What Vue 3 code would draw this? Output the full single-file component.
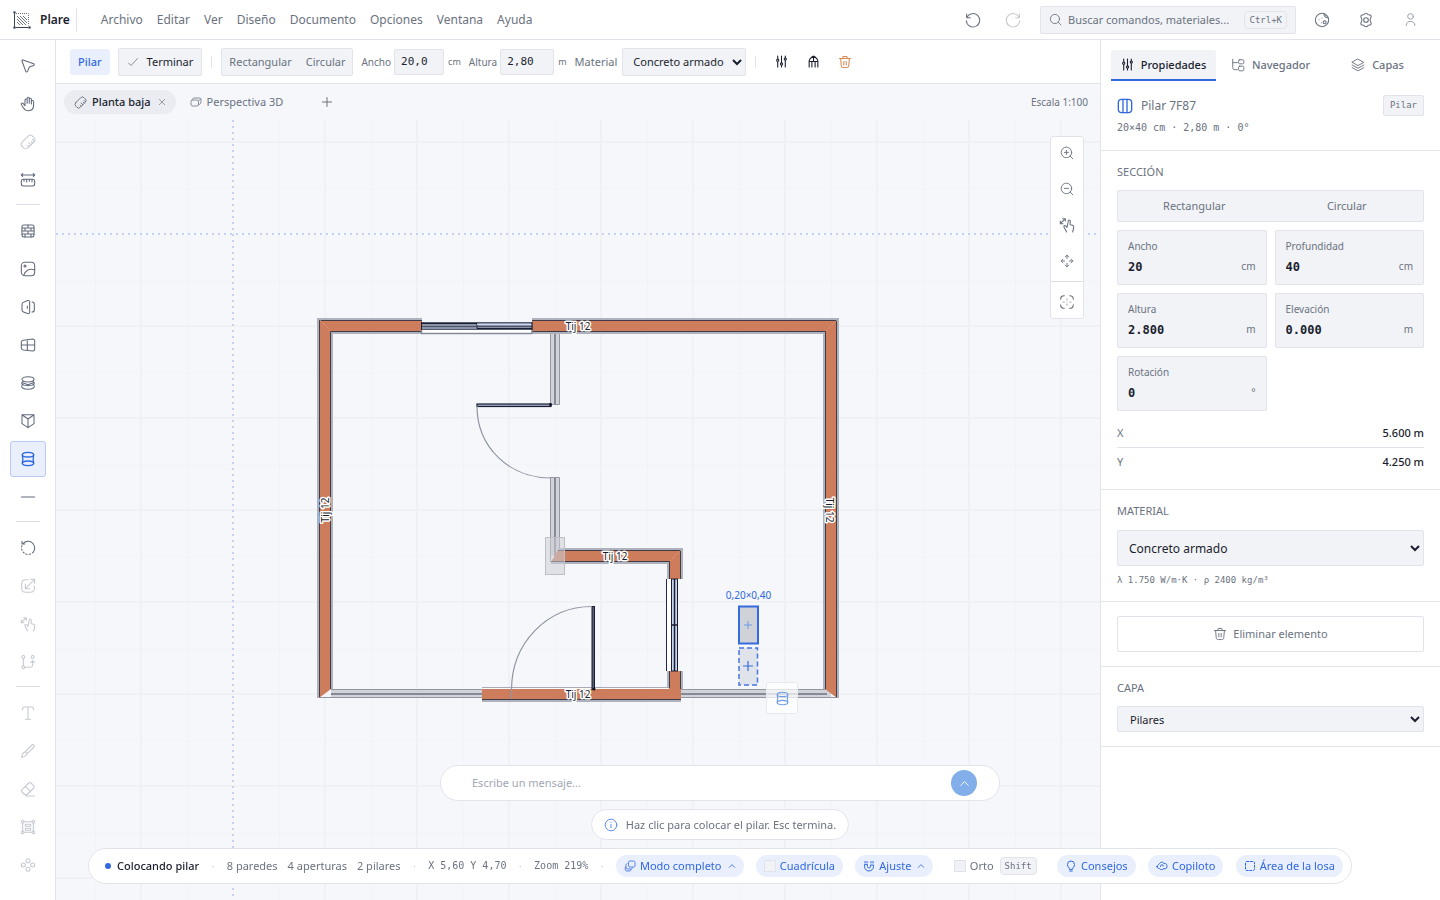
<script setup>
import { h, ref } from 'vue'

const glyphs = {
  cursor: '<path d="M3 4.500C2.600 3.400 3.600 2.500 4.700 2.900L20.500 8.700c1.300.5 1.200 2.300-.1 2.700L14 13.500l-2.700 6.600c-.5 1.300-2.300 1.200-2.700-.1z"/>',
  hand: '<path d="M7.500 14.500V6a1.600 1.600 0 0 1 3.200 0v5V3.600a1.600 1.600 0 0 1 3.200 0V11V5a1.600 1.600 0 0 1 3.200 0v7V8.500a1.600 1.600 0 0 1 3.300 0V14c0 5-3 8-7.500 8-4 0-6-1.300-8-4.500L2 12.800c-1-1.700 1.200-3.200 2.700-1.700z"/>',
  ruler: '<g transform="rotate(-45 12 12)"><rect x="1" y="6" width="22" height="12" rx="4.500"/><path d="M8 18v-3M12 18v-4.500M16 18v-3M19.500 17v-3"/></g>',
  measure: '<rect x="2" y="11" width="20" height="10" rx="3"/><path d="M2 4.500h20M4 2.500l-2 2 2 2M20 2.500l2 2-2 2M6 11v3M10 11v4M14 11v3M18 11v4"/>',
  wall: '<rect x="3" y="3" width="18" height="18" rx="3"/><path d="M3 7.500h18M3 12h18M3 16.500h18M12 3v4.500M7.500 7.500V12M16.500 7.500V12M12 12v4.500M7.500 16.500V21M16.500 16.500V21"/>',
  image: '<rect x="2" y="2" width="20" height="20" rx="5"/><circle cx="7.500" cy="7.500" r="1.500"/><path d="M5.500 21.500c2-7 8-11 16.500-8"/>',
  door: '<path d="M7 4l4.500-1.700c1.500-.5 3 .2 3 1.700v16c0 1.500-1.500 2.200-3 1.700L6 20c-1.500-.5-3-1-3-3V7.500C3 5.500 4.500 4.800 7 4zM11 11v3M18 4.500c2.500 0 3.500 1 3.500 3.500v8c0 2.500-1 3.500-3.500 3.500"/>',
  window: '<path d="M5 5l14-2c2 0 3 1 3 3v12c0 2-1 3-3 3L5 19.500c-2-.3-3-1-3-3V8c0-2 1-2.700 3-3zM11 4v16M2 12h20"/>',
  slabs: '<ellipse cx="12" cy="6.500" rx="9" ry="4"/><path d="M4.500 9.500C-1 14 6 16 12 16s13-2 7.500-6.500M4.500 14c-5.500 4.500 1.500 7.500 7.500 7.500s13-3 7.500-7.500M4 11.500l8 3 8-3"/>',
  roof: '<path d="M3 2.500h18v13.500l-9 6-9-6zM3.500 3L12 9l8.500-6M12 9v13"/>',
  pillar: '<ellipse cx="12" cy="5.500" rx="8.500" ry="3.500"/><path d="M3.500 5.500c1 4 1 9 0 13M20.500 5.500c-1 4-1 9 0 13"/><ellipse cx="12" cy="18.500" rx="8.500" ry="3.500"/>',
  line: '<path d="M2 12h20"/>',
  rotate: '<path d="M3 2v4h4M4 6a10 10 0 0 1 16 12"/><path stroke-dasharray="2 3" d="M20 18A10 10 0 0 1 3 8"/>',
  scale: '<path d="M12 2.500H9c-5 0-6.500 1.500-6.500 6.500v6c0 5 1.500 6.500 6.500 6.500h6c5 0 6.500-1.500 6.500-6.500v-3M22 2L8 16M8 9v7h7M16 2h6v6"/>',
  pinch: '<path d="M12 15.500l2-9.500c.4-2 3.200-1.500 3 .5l-.5 5c3.500.3 6.500 1.500 5.500 5l-1.500 6M12 15.500l-2-2.200c-1.400-1.300-3.300.2-2.500 1.700l4 7.500M2 10l7-7M2 6v4h4M5.500 2.500H9.500V6"/>',
  node: '<circle cx="5" cy="4.500" r="2.200"/><circle cx="19" cy="4.500" r="2.200"/><circle cx="5" cy="20" r="2.200"/><path d="M5 7v10.500M7.500 20H14c4 0 5-1 5-5v-4M16 13l3-3 3 3"/>',
  text: '<path d="M4 7V5c0-1.500.5-2 2-2h12c1.500 0 2 .5 2 2v2M12 3v18M8 21.500h8"/>',
  pencil: '<path d="M8 13L18 3c2-1.500 4.500 1 3 3L11 16c-1 3-4 4.500-8.500 5.500C3 17 4.500 14 8 13zM8 13l3 3"/>',
  eraser: '<path d="M3 13L13 3c1-1 2.500-1 3.500 0l4 4c1 1 1 2.500 0 3.500l-9 9c-2 2-3.500 2-5.500 0l-3-3c-1-1-1-2.500 0-3.500zM8 8l8 8M9 22.500h13"/>',
  group: '<circle cx="4" cy="4" r="2"/><circle cx="20" cy="4" r="2"/><circle cx="4" cy="20" r="2"/><circle cx="20" cy="20" r="2"/><path d="M6 4h12M6 20h12M4 6v12M20 6v12M8 8h8v3H8zM8 14h8v3H8z"/>',
  array: '<circle cx="12" cy="5.500" r="3"/><circle cx="12" cy="18.500" r="3"/><circle cx="5" cy="12" r="3"/><circle cx="19" cy="12" r="3"/>',
  undo: '<path d="M2.500 3v5.500H8M3 8a10 10 0 1 1-1 5"/>',
  redo: '<path d="M21.500 3v5.500H16M21 8a10 10 0 1 0 1 5"/>',
  search: '<circle cx="11" cy="11" r="8.500"/><path d="M17.500 17.500L22 22"/>',
  palette: '<circle cx="12" cy="12" r="10"/><path d="M15 2.500c-.5 3.500 2.500 6.500 6.500 6M7.500 11.500v.1M11 16v.1M12 9v.1M18 5v.1"/><circle cx="16" cy="15.500" r="2.200"/>',
  gear: '<path d="M8.800 4.200C10 2 10.800 1.800 12 1.800s2 .2 3.200 2.400c2.500-.2 3.500.1 4.200 1.200.7 1.200.8 2-.6 4.200-.6 1-.6 3.800 0 4.800 1.400 2.200 1.300 3 .6 4.200-.7 1.100-1.700 1.400-4.200 1.200C14 22 13.200 22.200 12 22.200s-2-.2-3.200-2.400c-2.500.2-3.500-.1-4.200-1.200-.7-1.200-.8-2 .6-4.200.6-1 .6-3.800 0-4.800-1.400-2.200-1.300-3-.6-4.200.7-1.100 1.700-1.400 4.200-1.200z"/><circle cx="12" cy="12" r="3.500"/>',
  user: '<circle cx="12" cy="7" r="4.500"/><path d="M5 21.500c0-9 14-9 14 0"/>',
  check: '<path d="M3 14l5 5L21 5"/>',
  sliders: '<path d="M5 2v5M5 12v10M12 2v12M12 19v3M19 2v3M19 10v12"/><circle cx="5" cy="9.500" r="2"/><circle cx="12" cy="16.500" r="2"/><circle cx="19" cy="7.500" r="2"/>',
  join: '<path d="M4 22V11c0-4 5-7 8-9 3 2 8 5 8 9v11M9 22v-9M15 22v-9M4 12h16M12 3v9"/>',
  trash: '<path d="M2.500 6h19M8 6l1-3.500h6L16 6M4.500 6l1 12c.2 2.500 1 3.500 4 3.500h5c3 0 3.800-1 4-3.500l1-12M10 11v6M14 11v6"/>',
  close: '<path d="M4 4l16 16M20 4L4 20"/>',
  box: '<path d="M2 12c0-3 1-4 4-4h8c2 0 3 1 3 3v5c0 2-1 4-4 4H6c-3 0-4-1-4-3zM4 8c1-3 2-4 5-4h9c3 0 4 1 4 3v5c0 3-2 4-5 6M17 10l4-4"/>',
  plus: '<path d="M12 3v18M3 12h18"/>',
  zoomin: '<circle cx="11" cy="11" r="9"/><path d="M17.500 17.500L22 22M11 7.500v7M7.500 11h7"/>',
  zoomout: '<circle cx="11" cy="11" r="9"/><path d="M17.500 17.500L22 22M7.500 11h7"/>',
  move: '<path d="M12 2v6M12 16v6M2 12h6M16 12h6M9 5l3-3 3 3M9 19l3 3 3-3M5 9l-3 3 3 3M19 9l3 3-3 3"/>',
  fit: '<path d="M8 2.500C4 2.500 2.500 4 2.500 8M16 2.500c4 0 5.500 1.500 5.500 5.500M8 21.500c-4 0-5.500-1.500-5.500-5.500M16 21.500c4 0 5.500-1.500 5.500-5.500"/><path opacity=".6" d="M12 7v2M12 15v2M6 12h2M16 12h2M12 12v.1"/>',
  tree: '<path d="M3 2v14c0 3 1 4 4 4h4M3 8h8"/><rect x="13" y="3" width="9" height="7" rx="2"/><rect x="13" y="14" width="9" height="8" rx="2"/>',
  layers: '<path d="M12 2l10 5.500L12 13 2 7.500zM2 12l10 5.500L22 12M2 16.500L12 22l10-5.500"/>',
  column: '<rect x="2" y="2" width="20" height="20" rx="5"/><path d="M9 2v20M15 2v20"/>',
  info: '<circle cx="12" cy="12" r="10"/><path d="M12 11v6M12 7v.5"/>',
  up: '<path d="M4 16l8-8 8 8"/>',
  copies: '<path d="M9 5c0-2 1-3 3-3h7c2 0 3 1 3 3v6c0 2-1 3-3 3h-7c-2 0-3-1-3-3zM6 7c-1.500.500-2 2-2 4v3c0 3 1 4 4 4h5c2 0 3.500-.5 4-2M3 14c-1.500 4-1 8 3 8h5c2 0 3-1 3-3"/>',
  magnet: '<path d="M3 10v3a9 9 0 0 0 18 0v-3h-6v3a3 3 0 0 1-6 0v-3zM4 3v3M8 3v3M16 3v3M20 3v3"/>',
  bulb: '<path d="M9 18c0-3-4-4-4-9a7 7 0 0 1 14 0c0 5-4 6-4 9zM9.500 22h5"/>',
  copilot: '<path d="M2 13c0-3 4-3 5-6 3-4 8-3 9 0 5-1 6 3 6 6 0 5-4 5-6 4-3 3-7 3-9 0-3 0-5-1-5-4zM9 13a3 3 0 0 1 6-1"/>',
  area: '<path stroke-dasharray="4 3" d="M6 3h12c2 0 3 1 3 3v12c0 2-1 3-3 3H6c-2 0-3-1-3-3V6c0-2 1-3 3-3z"/>',
}
const Icon = (p) => h('svg', {
  viewBox: '0 0 24 24', width: p.s || 16, height: p.s || 16, fill: 'none', stroke: 'currentColor',
  'stroke-width': p.w || 1.6, 'stroke-linecap': 'round', 'stroke-linejoin': 'round', 'aria-hidden': 'true',
  innerHTML: glyphs[p.n],
})
Icon.props = ['n', 's', 'w']

const menus = ['Archivo', 'Editar', 'Ver', 'Diseño', 'Documento', 'Opciones', 'Ventana', 'Ayuda']
const tools = [
  [['cursor', 'Seleccionar'], ['hand', 'Mano'], ['ruler', 'Regla', true], ['measure', 'Medir']],
  [['wall', 'Pared'], ['image', 'Imagen'], ['door', 'Puerta'], ['window', 'Ventana'], ['slabs', 'Losa'], ['roof', 'Techo'], ['pillar', 'Pilar'], ['line', 'Línea']],
  [['rotate', 'Rotar'], ['scale', 'Escalar', true], ['pinch', 'Estirar', true], ['node', 'Nodos', true]],
  [['text', 'Texto', true], ['pencil', 'Dibujar', true], ['eraser', 'Borrar', true], ['group', 'Agrupar', true], ['array', 'Matriz', true]],
]
const fields = ref([
  { id: 'w', label: 'Ancho', value: '20', unit: 'cm' },
  { id: 'd', label: 'Profundidad', value: '40', unit: 'cm' },
  { id: 'h', label: 'Altura', value: '2.800', unit: 'm' },
  { id: 'e', label: 'Elevación', value: '0.000', unit: 'm' },
  { id: 'r', label: 'Rotación', value: '0', unit: '°' },
])
const range = (start, end, step) => Array.from({ length: Math.ceil((end - start) / step) }, (_, i) => start + i * step)
const minorX = range(95, 1100, 92)
const majorX = range(141, 1100, 92).filter((x) => x !== 233)
const minorY = range(188, 900, 92)
const majorY = range(142, 900, 92).filter((y) => y !== 234)
const walls = [
  { fill: 'M319 698V320H422V332H331V689z', edge: 'M422 320.500H319.500V697M422 331.500H330.500V689', rim: 'M422 319H318V698M422 333H332V689' },
  { fill: 'M532 320H837V698L825 689V332H532z', edge: 'M532 320.500H836.500V697M532 331.500H825.500V689', rim: 'M532 319H838V698M532 333H824V689' },
  { fill: 'M551 562L558 550H681V579H669V562z', edge: 'M558 550.500H680.500V579M551 561.500H669.500V579', rim: 'M558 549H682V579M551 563H668V579' },
  { fill: 'M669 671H681V700H482V689H669z', edge: 'M669.500 671V688M680.500 671V689M482 699.500H681', rim: 'M668 671V687M682 671V689M482 701H681' },
]
const wallTags = [
  [578, 330, 0], [615, 560, 0], [578, 698, 0], [325, 510, -90], [830, 510, 90],
]
</script>

<template>
  <div class="app">
    <header class="top">
      <div class="brand">
        <svg width="20" height="20" viewBox="0 0 20 20" fill="none" stroke="#6b7280" aria-hidden="true">
          <path d="M2.500 2v15.500H18" stroke="#3f4454" />
          <path d="M4 3.500h12.500v12" stroke-dasharray="1 1" />
          <path d="M5 6l9 9M5 9l6 6M5 12l3 3M8 6l7 7M11 6l4 4" />
          <circle cx="2.500" cy="2.500" r="1" fill="#3f4454" /><circle cx="2.500" cy="17.500" r="1" fill="#3f4454" /><circle cx="17.500" cy="17.500" r="1" fill="#3f4454" />
        </svg>
        <strong>Plare</strong>
      </div>
      <nav class="menu"><button v-for="m in menus" :key="m">{{ m }}</button></nav>
      <div class="history">
        <button class="ib" aria-label="Deshacer"><Icon n="undo" /></button>
        <button class="ib dim" aria-label="Rehacer"><Icon n="redo" /></button>
      </div>
      <button class="search"><Icon n="search" s="13" /><span>Buscar comandos, materiales...</span><kbd>Ctrl+K</kbd></button>
      <div class="account">
        <button class="ib" aria-label="Tema"><Icon n="palette" /></button>
        <button class="ib" aria-label="Ajustes"><Icon n="gear" /></button>
        <button class="ib soft" aria-label="Cuenta"><Icon n="user" s="15" /></button>
      </div>
    </header>

    <aside class="tools">
      <template v-for="(g, i) in tools" :key="i">
        <hr v-if="i">
        <button v-for="t in g" :key="t[0]" :class="{ dim: t[2], on: t[0] === 'pillar' }" :aria-label="t[1]"><Icon :n="t[0]" :w="t[0] === 'pillar' ? 2 : 1.6" /></button>
      </template>
    </aside>

    <main class="work">
      <div class="context">
        <span class="mode">Pilar</span>
        <button class="done"><Icon n="check" s="12" />Terminar</button>
        <i class="sep"></i>
        <div class="seg"><button>Rectangular</button><button>Circular</button></div>
        <label for="cw">Ancho</label><input id="cw" class="w50" value="20,0"><small>cm</small>
        <label for="ch">Altura</label><input id="ch" class="w54" value="2,80"><small>m</small>
        <label for="cm" class="big">Material</label>
        <select id="cm"><option>Concreto armado</option></select>
        <i class="sep"></i>
        <div class="acts">
          <button aria-label="Propiedades"><Icon n="sliders" s="13" w="2" /></button>
          <button aria-label="Unir"><Icon n="join" s="13" w="2" /></button>
          <button class="warn" aria-label="Eliminar"><Icon n="trash" s="14" w="1.800" /></button>
        </div>
      </div>
      <div class="views">
        <div class="view on"><Icon n="ruler" s="13" /><span>Planta baja</span><button aria-label="Cerrar"><Icon n="close" s="8" w="2" /></button></div>
        <div class="view"><Icon n="box" s="12" /><span>Perspectiva 3D</span></div>
        <button class="add" aria-label="Añadir vista"><Icon n="plus" s="12" w="2" /></button>
        <span class="ratio">Escala 1:100</span>
      </div>
      <div class="canvas">
        <svg class="plan" viewBox="56 120 1044 780" preserveAspectRatio="xMinYMin slice">
          <defs>
            <pattern id="dots" width="2" height="2" patternUnits="userSpaceOnUse"><rect width="2" height="2" fill="#d3d6db" /><path d="M0 0h1v1H0zM1 1h1v1H1z" fill="#cbced5" /></pattern>
          </defs>
          <g stroke="#f2f4f8" stroke-width="1">
            <path v-for="x in minorX" :key="'a' + x" :d="`M${x}.5 120V900`" />
            <path v-for="y in minorY" :key="'b' + y" :d="`M56 ${y}.500H1100`" />
          </g>
          <g stroke="#eff1f5" stroke-width="2">
            <path v-for="x in majorX" :key="'c' + x" :d="`M${x} 120V900`" />
            <path v-for="y in majorY" :key="'d' + y" :d="`M56 ${y}H1100`" />
          </g>
          <path d="M233 120V900M56 234H1100" stroke="#c4d3f5" stroke-width="2" stroke-dasharray="2 4" />

          <g>
            <rect x="331" y="689" width="151" height="9" fill="#d0d3d8" /><rect x="681" y="689" width="150" height="9" fill="#d0d3d8" />
            <rect x="550" y="332" width="10" height="72" fill="#d0d3d8" /><rect x="550" y="478" width="10" height="78" fill="#d0d3d8" />
            <path d="M319 697.500H482M331 689.500H482M681 697.500H838M681 689.500H827M550.500 332V404.500H559.500V332M550.500 562V478.500M559.500 550V477.500H550" fill="none" stroke="#9297a2" />
            <path d="M331 694H482M681 694H827M555 332V404M555 478V556" stroke="#858a96" stroke-width="2" />
          </g>
          <g v-for="w in walls" :key="w.fill" fill="none">
            <path :d="w.fill" fill="#cd7d5c" />
            <path :d="w.rim" stroke="#adb2bd" stroke-width="2" />
            <path :d="w.edge" stroke="#403b46" />
          </g>
          <path d="M482 687.500H669" stroke="#a6abb5" /><path d="M482 688.500H669" stroke="#f8f9fc" />
          <path d="M320 320l11 11M837 320l-11 11M681 550l-11 11" stroke="#dda48b" stroke-dasharray="1 1" />

          <g>
            <rect x="421" y="329" width="111" height="5" fill="#fff" />
            <path d="M421 333.500H532M421.500 329v5M532 329v5" stroke="#858a96" stroke-width="1.500" />
            <rect x="421.500" y="322.500" width="110.500" height="7" fill="#8c94a8" stroke="#555d70" />
            <path d="M422 323.500H477V328.500H532" fill="none" stroke="#1b1e31" /><path d="M477 324.500H532" stroke="#c9d6f4" />
            <path d="M422 326.500H532" stroke="#4b5268" /><path d="M421.500 322v8M532 322v8" stroke="#1b1e31" />
            <rect x="667" y="579" width="5" height="92" fill="#fff" /><path d="M666.500 579V671" stroke="#22284b" />
            <rect x="671.500" y="579" width="6" height="92" fill="#c9d6f1" stroke="#1b1e31" /><path d="M674.500 579V671M671 625H678" stroke="#1b1e31" stroke-width="1.500" />
            <rect x="477" y="404" width="74" height="2.500" fill="#9fabc9" stroke="#1b1e31" stroke-width="1.200" /><circle cx="550.500" cy="404.500" r="1.500" fill="#111424" />
            <rect x="592" y="606.500" width="2.500" height="83" fill="#555b70" stroke="#1b1e31" /><circle cx="594" cy="689" r="1.500" fill="#111424" />
            <path d="M477 406C477 447 509 478 551 478M592 606.500C547 606.500 511.500 643 511.500 690V699" fill="none" stroke="#9095a3" stroke-width="1.200" />
          </g>
          <rect x="545.500" y="537.500" width="19" height="37" fill="#cdd0d7" fill-opacity=".55" stroke="#babfc8" />

          <rect x="739" y="606.500" width="19" height="37" fill="url(#dots)" stroke="#356bdf" stroke-width="2" />
          <rect x="739" y="648" width="18.500" height="37" fill="#e0e3e9" stroke="#4476e3" stroke-width="1.500" stroke-dasharray="5 3" />
          <path d="M744 625H752M748 621V629" stroke="#6e9ae8" /><path d="M743 666H753M748 661V671" stroke="#356bdf" stroke-width="1.200" />
          <text class="size" x="748.500" y="599">0,20×0,40</text>
          <text v-for="t in wallTags" :key="t.join()" class="tag" :transform="`translate(${t[0]} ${t[1]}) rotate(${t[2]})`" :y="t[2] ? 4 : 0">Tij 12</text>
          <rect x="766.500" y="682.500" width="31" height="31" rx="2" fill="#fff" fill-opacity=".7" stroke="#e6e9ef" />
          <g transform="translate(775 691) scale(.625)" fill="none" stroke="#72a0e8" stroke-width="1.800"><ellipse cx="12" cy="5.500" rx="8.500" ry="3.500" /><path d="M3.500 5.500c1 4 1 9 0 13M20.500 5.500c-1 4-1 9 0 13" /><ellipse cx="12" cy="18.500" rx="8.500" ry="3.500" /></g>
        </svg>
        <div class="zoom">
          <button aria-label="Acercar"><Icon n="zoomin" s="14" /></button>
          <button aria-label="Alejar"><Icon n="zoomout" s="14" /></button>
          <button aria-label="Desplazar"><Icon n="pinch" /></button>
          <button aria-label="Mover"><Icon n="move" s="14" /></button>
          <hr>
          <button aria-label="Ajustar a la vista"><Icon n="fit" /></button>
        </div>
      </div>
    </main>

    <aside class="panel">
      <div class="tabs" role="tablist">
        <button role="tab" aria-selected="true" class="on"><Icon n="sliders" s="13" w="2" />Propiedades</button>
        <button role="tab" aria-selected="false"><Icon n="tree" s="14" />Navegador</button>
        <button role="tab" aria-selected="false"><Icon n="layers" s="14" />Capas</button>
      </div>
      <section class="ident">
        <div class="name"><Icon n="column" w="2" /><span>Pilar 7F87</span><em>Pilar</em></div>
        <p class="mono">20×40 cm · 2,80 m · 0°</p>
      </section>
      <section class="shape">
        <h2>SECCIÓN</h2>
        <div class="seg wide"><button>Rectangular</button><button>Circular</button></div>
        <div class="fields">
          <div v-for="f in fields" :key="f.id" class="field">
            <label :for="'f-' + f.id">{{ f.label }}</label>
            <div><input :id="'f-' + f.id" v-model="f.value"><span>{{ f.unit }}</span></div>
          </div>
        </div>
        <dl><div><dt>X</dt><dd>5.600 m</dd></div><div><dt>Y</dt><dd>4.250 m</dd></div></dl>
      </section>
      <section class="material">
        <h2><label for="mat">MATERIAL</label></h2>
        <select id="mat"><option>Concreto armado</option></select>
        <p class="mono tiny">λ 1.750 W/m·K · ρ 2400 kg/m³</p>
      </section>
      <section class="remove"><button><Icon n="trash" s="14" />Eliminar elemento</button></section>
      <section class="layer">
        <h2><label for="lay">CAPA</label></h2>
        <select id="lay"><option>Pilares</option></select>
      </section>
    </aside>

    <div class="dock">
      <form class="chat" @submit.prevent>
        <input aria-label="Mensaje" placeholder="Escribe un mensaje...">
        <button aria-label="Enviar"><Icon n="up" s="11" w="2" /></button>
      </form>
      <div class="hint"><Icon n="info" s="14" /><span>Haz clic para colocar el pilar. Esc termina.</span></div>
      <footer class="status">
        <strong><i class="dot"></i>Colocando pilar</strong><b>·</b>
        <div class="counts"><span>8 paredes</span><span>4 aperturas</span><span>2 pilares</span></div><b>·</b>
        <code>X 5,60 Y 4,70</code><b>·</b><code>Zoom 219%</code><b>·</b>
        <button class="chip"><Icon n="copies" s="12" />Modo completo<Icon n="up" s="8" w="2.500" /></button>
        <label class="chip"><input type="checkbox">Cuadrícula</label>
        <button class="chip"><Icon n="magnet" s="12" w="2" />Ajuste<Icon n="up" s="8" w="2.500" /></button>
        <label class="chip plain"><input type="checkbox">Orto <kbd>Shift</kbd></label>
        <button class="chip"><Icon n="bulb" s="12" w="2" />Consejos</button>
        <button class="chip"><Icon n="copilot" s="12" w="2" />Copiloto</button>
        <button class="chip"><Icon n="area" s="12" w="2" />Área de la losa</button>
      </footer>
    </div>
  </div>
</template>

<style>
html, body, #app { height: 100%; }
body { margin: 0; overflow: hidden; }
</style>

<style scoped>
.app {
  --line: #e1e4eb; --fill: #f1f3f7; --ink: #1b1e2e; --mute: #6b7280; --blue: #3168df; --tint: #e9effc;
  --mono: "DejaVu Sans Mono", "Liberation Mono", monospace;
  height: 100%; display: grid; grid-template: 40px minmax(0, 1fr) / 56px minmax(0, 1fr) 340px;
  font: 11px/16px "Noto Sans", "Open Sans", sans-serif; color: var(--mute); background: #fff;
}
* { box-sizing: border-box; }
button, input, select { font: inherit; color: inherit; margin: 0; }
button { background: none; border: 0; padding: 0; display: flex; align-items: center; justify-content: center; white-space: nowrap; }
svg { flex: none; display: block; }
hr { border: 0; height: 1px; background: #dcdfe7; margin: 0; }
kbd, code, .mono { font-family: var(--mono); }
kbd { font-size: 9px; line-height: 14px; padding: 1px 4px; border: 1px solid var(--line); border-radius: 4px; background: var(--fill); }
.dim { color: #c6c9d1; }

.top { grid-column: 1 / -1; display: flex; align-items: center; padding: 0 12px; border-bottom: 1px solid var(--line); font-size: 12px; }
.brand { display: flex; align-items: center; gap: 8px; height: 24px; padding-right: 6px; border-right: 1px solid var(--line); color: var(--ink); }
.brand strong { font-weight: 600; }
.menu { display: flex; gap: 14px; padding-left: 24px; }
.history { display: flex; gap: 4px; margin: 0 9px 0 auto; }
.ib { width: 36px; height: 36px; }
.ib.soft { color: #9a9fad; }
.search { width: 256px; height: 28px; padding: 0 8px; gap: 6px; border: 1px solid var(--line); border-radius: 2px; background: var(--fill); font-size: 11px; }
.search span { flex: 1; text-align: left; }
.account { display: flex; gap: 8px; margin-left: 8px; }

.tools { display: flex; flex-direction: column; align-items: center; gap: 2px; padding-top: 8px; border-right: 1px solid var(--line); }
.tools button { width: 36px; height: 36px; flex: none; border: 1px solid transparent; border-radius: 3px; }
.tools button:not(.dim) { color: #636a7c; }
.tools button.on { background: var(--tint); border-color: #b9cbf4; color: var(--blue); }
.tools hr { width: 24px; margin: 4px 0 6px; flex: none; }

.work { display: flex; flex-direction: column; background: #f5f7fb; min-width: 0; }
.context { height: 44px; display: flex; align-items: center; padding: 0 14px; background: #fff; border-bottom: 1px solid var(--line); white-space: nowrap; }
.mode { background: var(--tint); color: var(--blue); font-weight: 500; padding: 5px 8px; border-radius: 3px; }
.done { height: 28px; margin-left: 8px; padding: 0 8px; gap: 8px; border: 1px solid var(--line); border-radius: 2px; background: var(--fill); color: var(--ink); }
.done svg { color: var(--mute); }
.sep { width: 1px; height: 12px; background: var(--line); margin: 0 9px; }
.seg { display: flex; height: 28px; border: 1px solid var(--line); border-radius: 2px; background: var(--fill); }
.seg button { padding: 0 7px; }
.context label { font-size: 10px; margin: 0 3px 0 8px; }
.context label.big { font-size: 11px; margin-right: 5px; }
.context input { height: 26px; padding: 0 6px; border: 1px solid var(--line); border-radius: 2px; background: var(--fill); font-family: var(--mono); color: var(--ink); }
.w50 { width: 50px; } .w54 { width: 54px; }
.context small { font-size: 9px; margin-left: 4px; }
select { border: 1px solid var(--line); border-radius: 2px; background: var(--fill); color: var(--ink); }
.context select { width: 124px; height: 28px; padding: 0 0 0 6px; }
.acts { display: flex; }
.acts button { width: 32px; height: 32px; color: var(--ink); }
.acts .warn { color: #d98a52; }
.views { height: 36px; display: flex; align-items: center; padding: 0 12px 0 8px; }
.view { display: flex; align-items: center; height: 24px; padding: 0 8px 0 10px; gap: 5px; border-radius: 12px; }
.view.on { background: #eaecf1; }
.view.on span { color: var(--ink); font-weight: 500; }
.view button { width: 12px; height: 16px; }
.view + .view { margin-left: 4px; }
.add { width: 24px; height: 24px; margin-left: 24px; }
.ratio { margin-left: auto; font-size: 10px; }
.canvas { flex: 1; min-height: 0; position: relative; overflow: hidden; }
.plan { width: 100%; height: 100%; }
.plan text { text-anchor: middle; font-size: 10px; }
.plan .size { fill: var(--blue); }
.plan .tag { fill: var(--ink); stroke: #fff; stroke-width: 3px; paint-order: stroke; stroke-linejoin: round; }
.zoom { position: absolute; top: 16px; right: 16px; width: 34px; display: flex; flex-direction: column; gap: 4px; background: #fff; border: 1px solid var(--line); border-radius: 3px; }
.zoom button { height: 32px; }

.panel { border-left: 1px solid var(--line); background: #fff; min-width: 0; }
.tabs { display: grid; grid-template-columns: repeat(3, 1fr); gap: 2px; padding: 10px 10px 0; }
.tabs button { height: 31px; gap: 7px; border-bottom: 2px solid transparent; font-weight: 500; }
.tabs .on { background: var(--fill); border-color: var(--blue); color: var(--ink); border-radius: 3px 3px 0 0; }
section { padding: 14px 16px; border-bottom: 1px solid var(--line); }
.name { display: flex; align-items: center; gap: 8px; font-size: 12px; line-height: 21px; }
.name svg { color: var(--blue); }
.name em { margin-left: auto; font: 9px/19px var(--mono); padding: 0 6px; border: 1px solid var(--line); border-radius: 2px; background: var(--fill); }
p { margin: 4px 0 0; }
.mono { font-size: 10px; }
.mono.tiny { font-size: 9px; }
h2 { margin: 0 0 10px; font-size: 11px; line-height: 16px; font-weight: 400; }
.seg.wide { height: 32px; }
.seg.wide button { flex: 1; }
.fields { display: grid; grid-template-columns: 1fr 1fr; gap: 8px; margin-top: 8px; }
.field { height: 55px; padding: 7px 10px 0; border: 1px solid var(--line); border-radius: 2px; background: var(--fill); }
.field label { display: block; font-size: 10px; line-height: 16px; }
.field div { display: flex; align-items: center; justify-content: space-between; height: 24px; }
.field input { width: 80px; border: 0; padding: 2px 0 0; background: none; font: 700 12px/16px var(--mono); color: var(--ink); }
.field span { font-size: 10px; }
dl { margin: 7px 0 6px; }
dl div { display: flex; justify-content: space-between; height: 29px; align-items: center; }
dl div + div { border-top: 1px solid var(--line); }
dt, dd { margin: 0; }
dd { color: var(--ink); font-weight: 500; }
.shape { padding-top: 13px; padding-bottom: 7px; }
section select { display: block; width: 100%; }
.material { padding-top: 13px; padding-bottom: 13px; }
.material h2 { margin-bottom: 11px; }
.material select { height: 36px; font-size: 12px; padding: 0 7px; }
.material p { margin-top: 6px; }
.remove button { width: 100%; height: 36px; gap: 6px; border: 1px solid var(--line); border-radius: 2px; }
.layer { padding-top: 13px; }
.layer select { height: 26px; padding: 0 8px; }

.dock { position: fixed; left: 88px; right: 88px; bottom: 16px; display: flex; flex-direction: column; align-items: center; gap: 8px; }
.chat, .hint, .status { display: flex; align-items: center; background: #fff; border: 1px solid var(--line); border-radius: 18px; }
.chat { width: 560px; height: 36px; padding: 0 22px 0 31px; }
.chat input { flex: 1; border: 0; padding: 0; outline: 0; background: none; }
.chat input::placeholder { color: #a3a7b3; }
.chat button { width: 26px; height: 26px; border-radius: 50%; background: #82aeea; color: #fff; }
.hint { height: 31px; padding: 0 12px; gap: 8px; }
.hint svg { color: #5489e6; }
.status { width: 100%; height: 36px; padding: 0 8px 0 16px; justify-content: space-between; white-space: nowrap; }
.status strong { display: flex; align-items: center; gap: 6px; color: var(--ink); font-weight: 500; }
.dot { width: 6px; height: 6px; border-radius: 50%; background: var(--blue); }
.status b { font-weight: 400; color: #cdd1da; }
.status code { font-size: 10px; }
.counts { display: flex; gap: 10px; }
.chip { display: flex; align-items: center; gap: 4px; height: 22px; padding: 0 8px; border-radius: 11px; background: var(--tint); color: var(--blue); }
.chip svg + svg { margin-left: 2px; }
.chip.plain { background: none; color: var(--mute); }
.chip input { appearance: none; width: 12px; height: 12px; border: 1px solid #e0e3e9; background: #f1f2f6; }
.chip kbd { margin-left: 2px; }
</style>
